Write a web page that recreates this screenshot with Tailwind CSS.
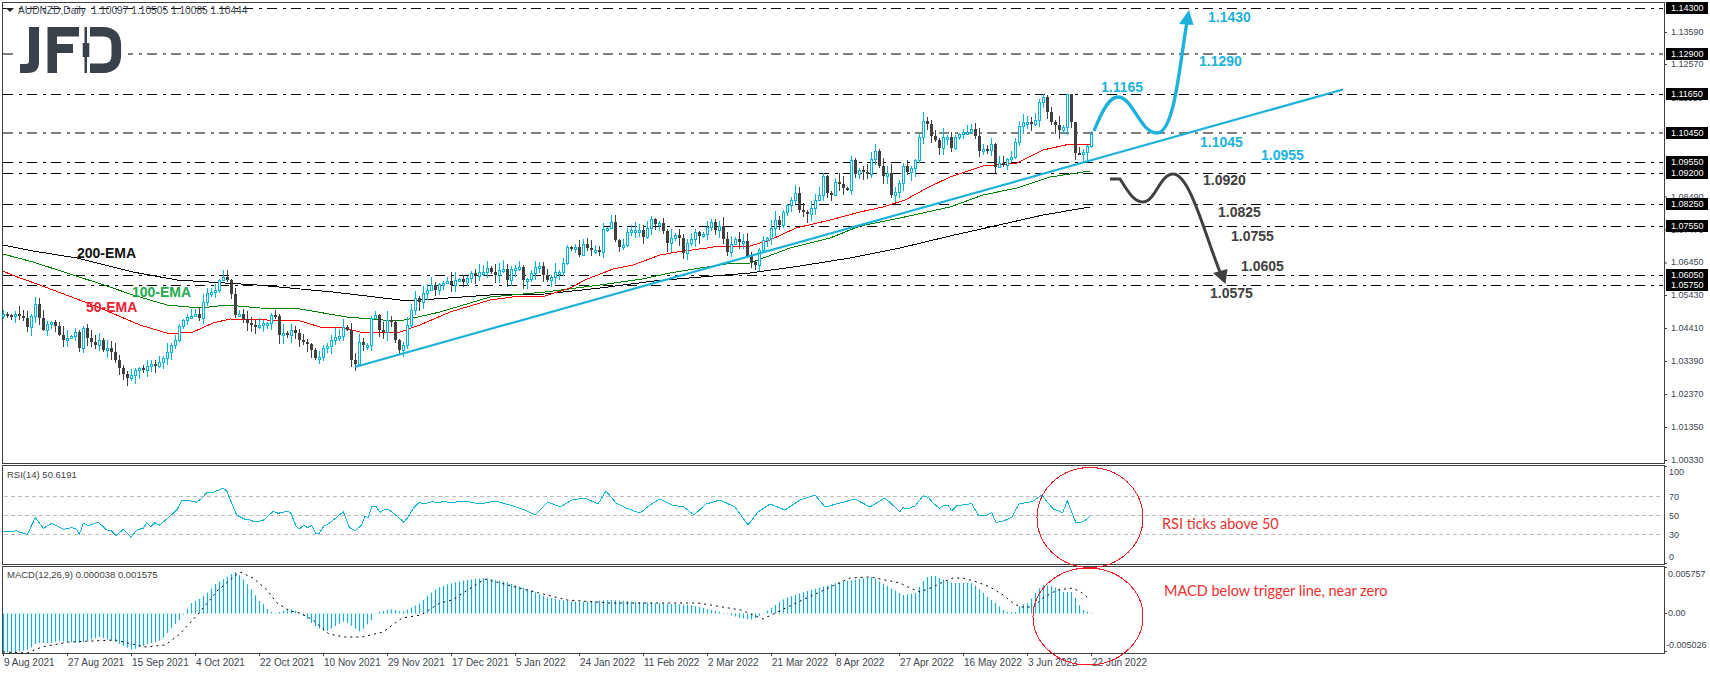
<!DOCTYPE html>
<html>
<head>
<meta charset="utf-8">
<script src="https://cdn.jsdelivr.net/npm/@tailwindcss/browser@4"></script>
<title>AUDNZD Daily</title>
</head>
<body class="bg-white">
<div class="relative w-[1710px] h-[674px] overflow-hidden bg-white font-['Liberation_Sans',sans-serif] text-[9.5px] leading-none text-[#3c4650]">

  <!-- panes -->
  <div class="flex flex-col pt-[2px] pl-[2px] w-[1665px]">
    <div class="h-[462px] border-t border-b border-l border-r border-[#404040]"></div>
    <div class="mt-[1px] h-[100px] border-t border-b border-l border-r border-[#404040]"></div>
    <div class="mt-[1px] h-[88px] border-t border-b border-l border-r border-[#404040]"></div>
    <!-- time axis -->
    <div class="flex pt-[4px] pl-[2px] whitespace-nowrap text-[10px]">
      <span class="w-[64px] shrink-0">9 Aug 2021</span>
      <span class="w-[64px] shrink-0">27 Aug 2021</span>
      <span class="w-[64px] shrink-0">15 Sep 2021</span>
      <span class="w-[64px] shrink-0">4 Oct 2021</span>
      <span class="w-[64px] shrink-0">22 Oct 2021</span>
      <span class="w-[64px] shrink-0">10 Nov 2021</span>
      <span class="w-[64px] shrink-0">29 Nov 2021</span>
      <span class="w-[64px] shrink-0">17 Dec 2021</span>
      <span class="w-[64px] shrink-0">5 Jan 2022</span>
      <span class="w-[64px] shrink-0">24 Jan 2022</span>
      <span class="w-[64px] shrink-0">11 Feb 2022</span>
      <span class="w-[64px] shrink-0">2 Mar 2022</span>
      <span class="w-[64px] shrink-0">21 Mar 2022</span>
      <span class="w-[64px] shrink-0">8 Apr 2022</span>
      <span class="w-[64px] shrink-0">27 Apr 2022</span>
      <span class="w-[64px] shrink-0">16 May 2022</span>
      <span class="w-[64px] shrink-0">3 Jun 2022</span>
      <span class="w-[64px] shrink-0">22 Jun 2022</span>
    </div>
  </div>

  <!-- chart drawing -->
  <svg class="absolute left-0 top-0" width="1710" height="674" viewBox="0 0 1710 674" fill="none">
    <g stroke="#000" stroke-width="1.1" stroke-dasharray="10 6 3 5">
      <line x1="3" x2="1663" y1="8.5" y2="8.5"/>
      <line x1="3" x2="1663" y1="54" y2="54"/>
      <line x1="3" x2="1663" y1="94.5" y2="94.5"/>
      <line x1="3" x2="1663" y1="133" y2="133"/>
      <line x1="3" x2="1663" y1="162.5" y2="162.5"/>
      <line x1="3" x2="1663" y1="173.5" y2="173.5"/>
      <line x1="3" x2="1663" y1="204.5" y2="204.5"/>
      <line x1="3" x2="1663" y1="226.5" y2="226.5"/>
      <line x1="3" x2="1663" y1="275.5" y2="275.5"/>
      <line x1="3" x2="1663" y1="285.5" y2="285.5"/>
    </g>
    <g stroke="#bdbdbd" stroke-width="1" stroke-dasharray="4 3">
      <line x1="4" x2="1663" y1="496.5" y2="496.5"/>
      <line x1="4" x2="1663" y1="515.5" y2="515.5"/>
      <line x1="4" x2="1663" y1="534.5" y2="534.5"/>
    </g>

    <!-- logo -->
    <rect x="13" y="16" width="115" height="66" fill="#fff"/>
    <g fill="#39424c">
      <path d="M29 27H39V62Q39 73 28 73H20V64H26Q29 64 29 61Z"/>
      <path d="M47.5 27H79V36.5H57V44H73V53H57V73H47.5Z"/>
      <rect x="84.5" y="27" width="2.5" height="46"/>
      <rect x="82.7" y="43" width="6.6" height="14"/>
    </g>
    <path d="M90 31.8H103Q116.3 31.8 116.3 45V55Q116.3 68.2 103 68.2H90" stroke="#39424c" stroke-width="9.6"/>

    <!-- EMAs -->
    <g shape-rendering="crispEdges">
      <polyline stroke="#000" stroke-width="1" points="3,245 33,251 77,258 133,272 177,280 257,285 333,292 400,300 420,300 490,295 545,294 600,288 654,281 677,279 713,276 750,273 800,266 850,258 900,248 950,236 990,227 1043,215 1090,207"/>
      <polyline stroke="#008000" stroke-width="1" points="3,254 33,262 67,273 107,286 133,295 167,305 200,308 227,305 260,308 300,309 347,317 383,320 400,321 440,312 490,297 545,292 600,285 642,279 670,273 700,268 733,263 750,263 790,248 830,238 860,226 900,218 950,207 983,195 1017,188 1050,177 1090,171"/>
      <polyline stroke="#f00" stroke-width="1" points="3,271 12,275 37,284 77,299 100,308 140,325 170,334 193,332 213,323 230,319 267,320 297,320 320,327 343,328 360,332 400,332 420,325 450,312 490,300 520,296 545,296 570,288 587,279 603,273 613,269 633,265 660,255 677,252 707,248 720,246 750,246 770,240 796,228 830,220 860,212 883,207 905,200 927,188 950,177 983,166 1017,163 1043,150 1070,144 1090,145"/>
    </g>

    <g id="candles"></g>

    <!-- trendline and scenarios -->
    <line x1="355" y1="367" x2="1343" y2="89.5" stroke="#1cb2dc" stroke-width="2.2"/>
    <path d="M1094 131C1103 108 1110 97 1118 97C1133 97 1140 133 1157 133C1175 133 1180 60 1187 22" stroke="#1cb2dc" stroke-width="3.4"/>
    <polygon points="1189,10 1179,24 1193.5,25" fill="#1cb2dc"/>
    <path d="M1110 179H1120C1130 195 1135 202 1143 202C1155 202 1160 174 1173 174C1190 174 1205 235 1220 272" stroke="#404040" stroke-width="3"/>
    <polygon points="1225.5,284 1213,273 1227.5,269" fill="#404040"/>

    <!-- indicators -->
    <polyline id="rsi" stroke="#12b3dc" stroke-width="1" shape-rendering="crispEdges"/>
    <g id="bars"></g>
    <polyline id="signal" stroke="#000" stroke-width="1" stroke-dasharray="2 4"/>

    <!-- annotations -->
    <ellipse cx="1090" cy="517.5" rx="53" ry="50" stroke="#ee1c25" stroke-width="1" shape-rendering="crispEdges"/>
    <ellipse cx="1088" cy="616.5" rx="55" ry="48.5" stroke="#ee1c25" stroke-width="1" shape-rendering="crispEdges"/>

    <!-- axis lines and ticks -->
    <g stroke="#404040" stroke-width="1">
      <path d="M1664.5 32.5H1667M1664.5 64.5H1667M1664.5 197H1667M1664.5 230H1667M1664.5 263H1667M1664.5 295.5H1667M1664.5 328.5H1667M1664.5 361.5H1667M1664.5 394.5H1667M1664.5 427.5H1667M1664.5 460.5H1667"/>
      <path d="M1664.5 466.5H1667M1664.5 563.5H1667M1664.5 567.5H1667M1664.5 613.5H1667M1664.5 651.5H1667"/>
      <path d="M3.5 653V656M67.5 653V656M131.5 653V656M195.5 653V656M259.5 653V656M323.5 653V656M387.5 653V656M451.5 653V656M515.5 653V656M579.5 653V656M643.5 653V656M707.5 653V656M771.5 653V656M835.5 653V656M899.5 653V656M963.5 653V656M1027.5 653V656M1091.5 653V656"/>
    </g>
    <polygon points="6,8 14,8 10,12" fill="#222"/>
  </svg>

  <!-- chart caption -->
  <div class="absolute left-[18px] top-[6px] whitespace-pre text-[10.2px]">AUDNZD,Daily  1.10097 1.10505 1.10085 1.10444</div>
  <div class="absolute left-[7px] top-[470px] text-[#444]">RSI(14) 50.6191</div>
  <div class="absolute left-[7px] top-[570px] text-[#444]">MACD(12,26,9) 0.000038 0.001575</div>

  <!-- price scale -->
  <div class="absolute left-[1666px] top-0 w-[44px] h-[660px] text-[9px]">
    <span class="absolute left-[5px] top-[28px]">1.13590</span>
    <span class="absolute left-[5px] top-[60px]">1.12570</span>
    <span class="absolute left-[5px] top-[94px]">1.11550</span>
    <span class="absolute left-[5px] top-[193px]">1.08490</span>
    <span class="absolute left-[5px] top-[226px]">1.07470</span>
    <span class="absolute left-[5px] top-[258px]">1.06450</span>
    <span class="absolute left-[5px] top-[291px]">1.05430</span>
    <span class="absolute left-[5px] top-[324px]">1.04410</span>
    <span class="absolute left-[5px] top-[357px]">1.03390</span>
    <span class="absolute left-[5px] top-[390px]">1.02370</span>
    <span class="absolute left-[5px] top-[423px]">1.01350</span>
    <span class="absolute left-[5px] top-[456px]">1.00330</span>

    <span class="absolute left-0 top-[2px] w-[42px] h-[12px] pl-[5px] pt-[2px] bg-black text-white">1.14300</span>
    <span class="absolute left-0 top-[48px] w-[42px] h-[12px] pl-[5px] pt-[2px] bg-black text-white">1.12900</span>
    <span class="absolute left-0 top-[88px] w-[42px] h-[12px] pl-[5px] pt-[2px] bg-black text-white">1.11650</span>
    <span class="absolute left-0 top-[127px] w-[42px] h-[12px] pl-[5px] pt-[2px] bg-black text-white">1.10450</span>
    <span class="absolute left-0 top-[156px] w-[42px] h-[12px] pl-[5px] pt-[2px] bg-black text-white">1.09550</span>
    <span class="absolute left-0 top-[167px] w-[42px] h-[12px] pl-[5px] pt-[2px] bg-black text-white">1.09200</span>
    <span class="absolute left-0 top-[198px] w-[42px] h-[12px] pl-[5px] pt-[2px] bg-black text-white">1.08250</span>
    <span class="absolute left-0 top-[220px] w-[42px] h-[12px] pl-[5px] pt-[2px] bg-black text-white">1.07550</span>
    <span class="absolute left-0 top-[269px] w-[42px] h-[11px] pl-[5px] pt-[2px] bg-black text-white">1.06050</span>
    <span class="absolute left-0 top-[279px] w-[42px] h-[12px] pl-[5px] pt-[2px] bg-black text-white">1.05750</span>

    <span class="absolute left-[3px] top-[468px]">100</span>
    <span class="absolute left-[3px] top-[493px]">70</span>
    <span class="absolute left-[3px] top-[512px]">50</span>
    <span class="absolute left-[3px] top-[531px]">30</span>
    <span class="absolute left-[3px] top-[553px]">0</span>
    <span class="absolute left-[2px] top-[570px]">0.005757</span>
    <span class="absolute left-[2px] top-[609px]">0.00</span>
    <span class="absolute left-0 top-[641px]">-0.005026</span>
  </div>

  <!-- labels on the chart -->
  <div class="absolute inset-0 font-bold text-[14px] leading-[16px]">
    <span class="absolute left-[77px] top-[245px] text-[#111]">200-EMA</span>
    <span class="absolute left-[132px] top-[284px] text-[#22a94f]">100-EMA</span>
    <span class="absolute left-[86px] top-[299px] text-[#ee2233]">50-EMA</span>

    <span class="absolute left-[1208px] top-[9px] text-[#1cb2dc]">1.1430</span>
    <span class="absolute left-[1199px] top-[53px] text-[#1cb2dc]">1.1290</span>
    <span class="absolute left-[1101px] top-[79px] text-[#1cb2dc]">1.1165</span>
    <span class="absolute left-[1200px] top-[134px] text-[#1cb2dc]">1.1045</span>
    <span class="absolute left-[1261px] top-[147px] text-[#1cb2dc]">1.0955</span>

    <span class="absolute left-[1203px] top-[172px] text-[#404040]">1.0920</span>
    <span class="absolute left-[1218px] top-[204px] text-[#404040]">1.0825</span>
    <span class="absolute left-[1231px] top-[228px] text-[#404040]">1.0755</span>
    <span class="absolute left-[1241px] top-[258px] text-[#404040]">1.0605</span>
    <span class="absolute left-[1210px] top-[285px] text-[#404040]">1.0575</span>
  </div>
  <div class="absolute left-[1162px] top-[514px] font-['Lato',sans-serif] text-[14.5px] leading-[20px] text-[#ee3030]">RSI ticks above 50</div>
  <div class="absolute left-[1164px] top-[581px] font-['Lato',sans-serif] text-[14.5px] leading-[20px] text-[#ee3030]">MACD below trigger line, near zero</div>
</div>

<script>
var NS = 'http://www.w3.org/2000/svg';
var closes = [314,315,316,314,316,318,327,316,304,318,330,324,322,326,335,340,338,336,332,348,328,338,342,345,340,350,348,352,360,368,
374,378,375,370,368,370,366,364,366,362,358,352,345,340,326,320,317,316,314,318,302,293,292,290,280,277,280,294,315,314,
319,323,325,327,325,323,323,315,316,335,333,335,330,333,340,342,344,350,358,357,348,346,340,337,336,327,330,360,364,342,
345,345,318,315,330,332,320,322,340,350,345,325,310,298,302,293,290,285,290,284,283,281,285,280,279,282,278,273,276,272,
272,268,272,275,270,269,280,269,268,267,280,279,273,267,266,275,280,277,272,272,263,247,248,247,255,244,248,250,250,252,
229,228,222,240,247,245,232,230,230,230,237,228,219,224,223,231,243,238,235,238,253,243,239,232,236,234,227,222,230,226,
239,252,244,239,242,241,256,262,265,250,240,238,228,220,225,212,205,200,193,210,212,214,208,200,195,176,193,195,182,184,
188,190,160,174,170,172,174,159,151,166,176,173,195,192,183,166,172,168,160,137,121,124,136,140,148,137,137,148,137,134,
132,132,129,136,151,149,150,144,167,163,165,159,157,142,126,122,122,124,120,102,97,112,122,125,130,127,94,122,153,154,
152,146,134];

/* wick ends read from the reference, keyed by the bar's x position */
var highs = { 923: 112, 1043: 94, 1067: 94, 1071: 94, 1075: 122, 1091: 131 };
var lows = { 995: 173, 1083: 162, 1079: 155 };

function el(parent, name, attrs) {
  var e = document.createElementNS(NS, name);
  for (var k in attrs) e.setAttribute(k, attrs[k]);
  parent.appendChild(e);
  return e;
}
function seq(i, a) { return (((i * 7919 + 13) * (i + a)) % 97) / 97; }

var g = document.getElementById('candles');
g.setAttribute('shape-rendering', 'crispEdges');
closes.forEach(function (c, i) {
  var x = 3 + 4 * i;
  var o = i ? closes[i - 1] : 314;
  var top = Math.min(o, c), bot = Math.max(o, c);
  var bull = c <= o;
  var col = bull ? '#00b4e0' : '#404040';
  var hi = highs[x] !== undefined ? highs[x] : top - 1 - Math.round(seq(i, 3) * 8);
  var lo = lows[x] !== undefined ? lows[x] : bot + 1 + Math.round(seq(i, 11) * 8);
  el(g, 'rect', { x: x, y: hi, width: 1, height: lo - hi, fill: col });
  if (bot - top < 2) bot = top + 2;
  if (bull) {
    el(g, 'rect', { x: x - 0.5, y: top + 0.5, width: 2, height: bot - top, fill: '#fff', stroke: col, 'stroke-width': 1 });
  } else {
    el(g, 'rect', { x: x - 1, y: top, width: 3, height: bot - top, fill: col });
  }
});

/* RSI: first part read at 3x from the left crop, last part from the right crop */
var left = [8,273,30,276,50,272,60,277,82,283,106,233,130,265,155,250,190,268,215,263,230,268,238,283,250,250,265,257,295,247,320,270,335,273,348,287,370,268,393,292,410,270,430,265,440,248,453,260,465,248,478,256,505,233,530,210,545,183,570,182,590,187,605,175,620,158,640,157,668,145,680,152,695,190,710,225,735,238,750,240,765,246,790,241,820,214,835,220,860,214,872,218,888,258,898,267,912,255,922,263,935,256,948,282,958,280,972,258,985,252,1000,240,1030,215,1048,262,1065,272,1085,255,1095,228,1105,233,1115,200,1127,198,1140,217,1155,208,1165,208,1190,228,1212,247,1225,230,1240,205,1258,187,1272,192,1295,185,1320,189,1330,183,1350,188];
var mid = [465,501,480,504,495,501,510,505,525,510,535,515,548,502,560,507,572,500,585,498,598,504,606,491,616,503,626,508,640,513,650,505,660,499,672,505,684,507,694,515,706,504,720,500,735,507,748,525,758,512,770,504,785,510,800,500,815,495,825,507,840,503,855,499,870,507,885,498];
var right = [0,215,8,203,22,207,45,198,70,167,85,172,100,190,118,205,130,197,145,197,155,212,170,197,215,191,235,225,260,225,275,218,288,247,310,243,335,232,358,190,385,188,400,183,425,165,445,190,460,207,475,212,488,218,502,182,527,247,545,247,560,238,570,228];
var pts = [];
for (var i = 0; i < left.length; i += 2) pts.push((left[i] / 3).toFixed(1) + ',' + (440 + left[i + 1] / 3).toFixed(1));
for (i = 0; i < mid.length; i += 2) pts.push(mid[i] + ',' + mid[i + 1]);
for (i = 0; i < right.length; i += 2) pts.push((900 + right[i] / 3).toFixed(1) + ',' + (440 + right[i + 1] / 3).toFixed(1));
document.getElementById('rsi').setAttribute('points', pts.join(' '));

/* MACD histogram outline and signal line, in page pixels */
var hist = [3,652,11,653,21,651,29,649,36,643,50,643,57,641,69,642,80,643,99,637,115,642,132,650,145,645,161,640,172,627,180,619,184,613,191,603,199,599,208,592,215,584,225,578,231,574,235,572,240,576,246,583,253,592,258,600,263,604,267,609,271,612,275,613,283,611,292,609,299,613,305,617,313,625,325,632,337,625,344,621,360,632,371,620,375,613,390,609,402,612,420,603,428,595,437,588,448,584,465,580,485,578,505,582,530,590,545,597,560,600,578,602,610,600,654,603,690,605,720,612,740,618,752,620,765,612,785,598,810,590,840,582,872,577,890,588,903,595,915,593,923,581,928,576,935,576,939,578,952,583,972,583,980,590,987,597,995,603,1003,610,1007,612,1015,612,1020,605,1028,603,1037,590,1043,585,1052,586,1063,592,1072,592,1076,600,1080,607,1084,611,1091,613];
var sig = [3,652,27,653,42,647,69,642,115,640,145,647,165,645,180,634,199,613,218,590,230,580,240,572,253,578,267,590,277,603,290,611,300,613,313,620,329,634,345,637,362,637,383,632,402,618,421,615,440,603,452,600,485,579,523,589,567,600,610,603,698,603,741,610,763,619,796,603,850,578,870,577,900,583,910,588,920,592,933,587,943,582,953,578,963,578,977,582,990,587,1003,595,1013,603,1020,607,1033,607,1043,598,1057,590,1073,588,1082,593,1088,598];
function at(a, x) {
  for (var j = 0; j < a.length - 2; j += 2) {
    if (x <= a[j + 2]) {
      var t = (x - a[j]) / (a[j + 2] - a[j]);
      return a[j + 1] + t * (a[j + 3] - a[j + 1]);
    }
  }
  return a[a.length - 1];
}
var bars = document.getElementById('bars');
for (i = 0; i < 273; i++) {
  var bx = 3 + 4 * i, v = at(hist, bx), zero = 613.5;
  el(bars, 'rect', { x: bx - 0.1, y: Math.min(v, zero), width: 1.2, height: Math.max(Math.abs(v - zero), 0.5), fill: '#14aed8' });
}
var sp = [];
for (i = 0; i < sig.length; i += 2) sp.push(sig[i] + ',' + sig[i + 1]);
document.getElementById('signal').setAttribute('points', sp.join(' '));
</script>
</body>
</html>
